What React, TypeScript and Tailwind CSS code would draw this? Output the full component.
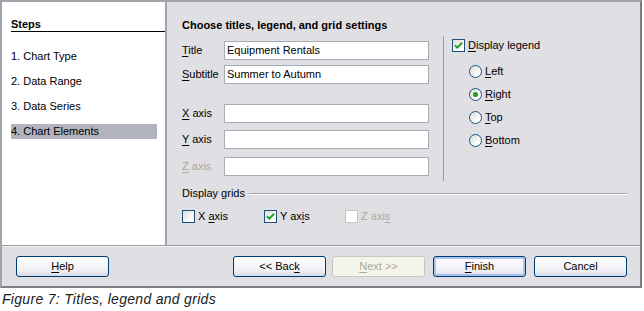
import type { ReactNode } from "react";

function U({ children }: { children: ReactNode }) {
  return <span className="underline underline-offset-[2px]">{children}</span>;
}

function CheckBox({ checked, disabled }: { checked?: boolean; disabled?: boolean }) {
  return (
    <span
      className={
        disabled
          ? "flex h-[13px] w-[13px] shrink-0 items-center justify-center border border-[#cac8bb] bg-white"
          : "flex h-[13px] w-[13px] shrink-0 items-center justify-center border border-[#1c5180] bg-[linear-gradient(135deg,#dcdcd7,#ffffff_80%)]"
      }
    >
      {checked && (
        <svg width="9" height="9" viewBox="0 0 9 9" fill="none">
          <path d="M1 4.2L3.4 6.6L8 1.8" stroke="#21a121" strokeWidth="2" />
        </svg>
      )}
    </span>
  );
}

function Radio({ checked, label }: { checked?: boolean; label: ReactNode }) {
  return (
    <div className="flex h-[13px] items-center gap-[3px]">
      <span className="flex h-[13px] w-[13px] items-center justify-center rounded-full border border-[#1c5180] bg-[linear-gradient(135deg,#dcdcd7,#ffffff_75%)]">
        {checked && <span className="h-[5px] w-[5px] rounded-full bg-[#21a121]" />}
      </span>
      <span>{label}</span>
    </div>
  );
}

function Field({ label, value, disabled, className }: { label: ReactNode; value?: string; disabled?: boolean; className?: string }) {
  return (
    <div className={"flex items-center " + (className ?? "")}>
      <span className={"w-[42px] " + (disabled ? "text-[#aca899]" : "")}>{label}</span>
      <div className="flex h-[19px] w-[205px] items-center border border-[#a5acb2] bg-white pl-[2px]">{value}</div>
    </div>
  );
}

function Button({ children, kind }: { children: ReactNode; kind?: "default" | "disabled" }) {
  const base = "flex h-[21px] w-[93px] items-center justify-center rounded-[3px] border";
  if (kind === "disabled")
    return <div className={base + " border-[#c9c7ba] bg-[#f5f4ea] text-[#aca899]"}>{children}</div>;
  return (
    <div
      className={
        base +
        " border-[#003c74] bg-[linear-gradient(180deg,#ffffff,#f1f1f5_70%,#d9d9e6)] " +
        (kind === "default" ? "shadow-[inset_0_0_0_2px_#a9c3f0]" : "")
      }
    >
      {children}
    </div>
  );
}

export default function App() {
  const steps = ["1. Chart Type", "2. Data Range", "3. Data Series", "4. Chart Elements"];
  return (
    <div className="h-[311px] w-[644px] bg-white font-['Liberation_Sans',Arial,sans-serif] text-[11px] leading-[13px] text-black">
      <div className="flex h-[288px] w-[642px] flex-col border-2 border-[#a3a3ab] border-r-[#7d7d8a] border-b-[#7d7d8a] bg-[#e0dfe3]">
        <div className="flex h-[243px]">
          {/* Steps */}
          <div className="w-[165px] border-r-2 border-[#a3a3ab] bg-white">
            <div className="ml-[9px] mt-[16px] border-b border-black font-bold">Steps</div>
            <div className="mt-[17px] flex flex-col gap-[10px]">
              {steps.map((s, i) => (
                <div
                  key={s}
                  className={"ml-[9px] h-[15px] w-[146px] leading-[15px] " + (i === 3 ? "bg-[#b2b4bd]" : "")}
                >
                  {s}
                </div>
              ))}
            </div>
          </div>

          {/* Settings */}
          <div className="flex-1 pl-[15px] pt-[17px]">
            <div className="font-bold">Choose titles, legend, and grid settings</div>
            <div className="mt-[4px] flex">
              <div className="w-[247px] pt-[5px]">
                <Field label={<><U>T</U>itle</>} value="Equipment Rentals" />
                <Field label={<><U>S</U>ubtitle</>} value="Summer to Autumn" className="mt-[5px]" />
                <Field label={<><U>X</U> axis</>} className="mt-[20px]" />
                <Field label={<><U>Y</U> axis</>} className="mt-[7px]" />
                <Field label={<><U>Z</U> axis</>} disabled className="mt-[8px]" />
              </div>
              <div className="ml-[14px] h-[145px] border-l border-[#9d9da3]" />
              <div className="pl-[8px] pt-[3px]">
                <div className="flex items-center gap-[3px]">
                  <CheckBox checked />
                  <span>
                    <U>D</U>isplay legend
                  </span>
                </div>
                <div className="ml-[17px] mt-[13px] flex flex-col gap-[10px]">
                  <Radio label={<><U>L</U>eft</>} />
                  <Radio checked label={<><U>R</U>ight</>} />
                  <Radio label={<><U>T</U>op</>} />
                  <Radio label={<><U>B</U>ottom</>} />
                </div>
              </div>
            </div>
            <div className="mr-[13px] mt-[6px] flex items-center">
              <span>Display grids</span>
              <div className="ml-[4px] flex-1 border-t border-[#a3a3ab] shadow-[0_1px_0_#ffffff]" />
            </div>
            <div className="mt-[10px] flex items-center">
              <div className="flex w-[82px] items-center gap-[3px]">
                <CheckBox />
                <span>
                  X <U>a</U>xis
                </span>
              </div>
              <div className="flex w-[81px] items-center gap-[3px]">
                <CheckBox checked />
                <span>
                  Y ax<U>i</U>s
                </span>
              </div>
              <div className="flex items-center gap-[3px] text-[#aca899]">
                <CheckBox disabled />
                <span>
                  Z axi<U>s</U>
                </span>
              </div>
            </div>
          </div>
        </div>

        {/* Buttons */}
        <div className="flex flex-1 items-start border-t border-[#9a9aa2] pl-[14px] pr-[13px] pt-[10px] shadow-[inset_0_1px_0_#f6f6f8]">
          <Button>
            <U>H</U>elp
          </Button>
          <div className="flex-1" />
          <Button>
            &lt;&lt; Bac<U>k</U>
          </Button>
          <div className="ml-[6px]">
            <Button kind="disabled">
              <U>N</U>ext &gt;&gt;
            </Button>
          </div>
          <div className="ml-[8px]">
            <Button kind="default">
              <U>F</U>inish
            </Button>
          </div>
          <div className="ml-[8px]">
            <Button>Cancel</Button>
          </div>
        </div>
      </div>
      <div className="ml-[2px] mt-[3px] text-[14px] italic leading-[16px] tracking-[0.3px] text-[#1a1a1a]">
        Figure 7: Titles, legend and grids
      </div>
    </div>
  );
}
